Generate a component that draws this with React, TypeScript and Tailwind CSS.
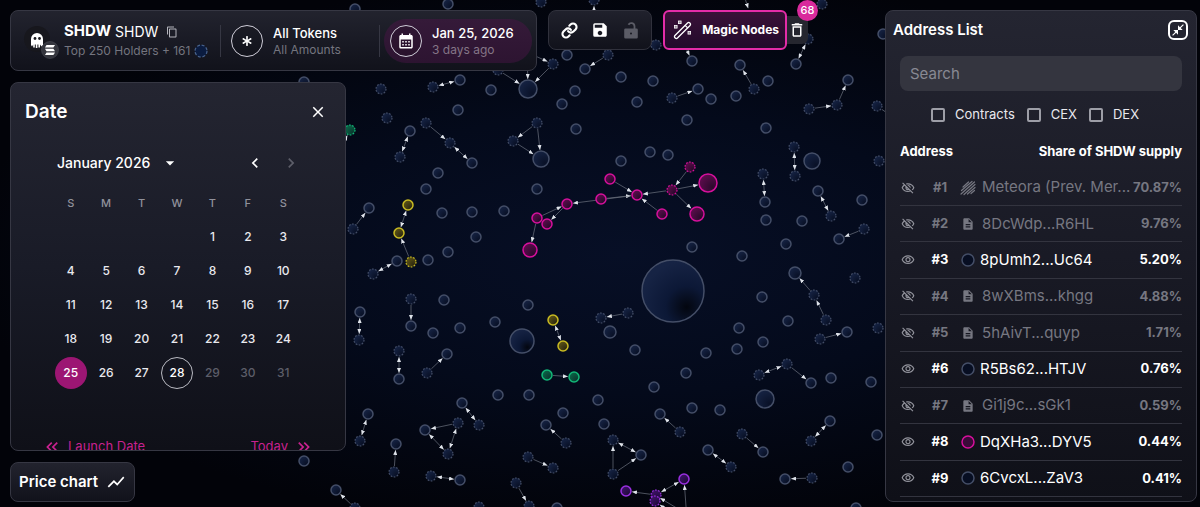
import { useState } from 'react'
import type { ReactNode } from 'react'
import { Link } from 'lucide-react'
import { FaAsterisk } from 'react-icons/fa'
import {
  MdArrowDropDown,
  MdCalendarMonth,
  MdChevronLeft,
  MdChevronRight,
  MdClose,
  MdCloseFullscreen,
  MdContentCopy,
  MdDeleteOutline,
  MdDescription,
  MdKeyboardDoubleArrowLeft,
  MdKeyboardDoubleArrowRight,
  MdOutlineVisibility,
  MdOutlineVisibilityOff,
  MdSave,
  MdShowChart,
} from 'react-icons/md'

type Tone = 'blue' | 'pink' | 'yellow' | 'green' | 'purple'

// x, y, radius (defaults to 5)
type Point = [number, number, number?]
// x1, y1, x2, y2, arrow on both ends
type Edge = [number, number, number, number, boolean?]

const tones: Record<Tone, { stroke: string; inner: string; outer: string }> = {
  blue: { stroke: '#444e67', inner: '#152242', outer: '#091127' },
  pink: { stroke: '#d6109c', inner: '#5c0c4c', outer: '#2b0a2c' },
  yellow: { stroke: '#c9bb22', inner: '#5c5316', outer: '#2f2a10' },
  green: { stroke: '#12b878', inner: '#0b6447', outer: '#0a3a30' },
  purple: { stroke: '#9a2fe0', inner: '#3d1266', outer: '#210a3d' },
}

const solid: Record<Tone, Point[]> = {
  blue: [
    [355, 9], [448, 4], [304, 82], [460, 80], [491, 90], [528, 89, 9], [585, 69], [575, 91], [562, 104], [576, 129],
    [458, 110], [472, 163], [410, 131], [541, 159, 8], [438, 173], [426, 189], [537, 189], [369, 208], [397, 261],
    [428, 260], [448, 252], [476, 237], [442, 213], [472, 212], [504, 211], [567, 55], [621, 77], [653, 81], [692, 61],
    [740, 65], [796, 64], [698, 89], [711, 99], [736, 96], [768, 81], [637, 102], [687, 120], [766, 128], [848, 80],
    [812, 161, 8], [765, 202], [766, 220], [802, 221], [818, 191], [862, 200], [839, 239], [786, 244], [742, 256],
    [692, 247], [795, 273, 6], [650, 152], [668, 155], [621, 161], [673, 291, 31], [360, 312], [411, 326], [444, 300],
    [433, 333], [460, 328], [495, 322], [528, 305], [522, 341, 12], [399, 379], [447, 354], [498, 395], [529, 395],
    [563, 413], [546, 425], [462, 403], [425, 430], [368, 414], [396, 444], [460, 480], [304, 461], [336, 490],
    [557, 508], [610, 332, 6], [635, 350], [706, 353], [739, 328], [737, 349], [763, 342], [762, 297], [788, 321],
    [847, 332], [811, 383], [831, 378], [871, 382], [765, 399, 9], [686, 373], [654, 387], [598, 400], [604, 424],
    [692, 408], [720, 410], [660, 414], [763, 452], [708, 450], [830, 421], [877, 435], [848, 467], [785, 479],
    [856, 508], [641, 455], [883, 34],
  ],
  pink: [
    [610, 179], [601, 199], [567, 204], [537, 218], [547, 224], [530, 250, 7], [708, 183, 9], [697, 214, 7],
    [662, 214], [637, 195],
  ],
  yellow: [[408, 205], [399, 233], [553, 320], [563, 346]],
  green: [[547, 375], [574, 377]],
  purple: [[626, 491], [684, 479]],
}

const dashed: Record<Tone, Point[]> = {
  blue: [
    [541, 2], [594, 0], [433, 87], [381, 89], [387, 118], [498, 70], [553, 64], [426, 123], [450, 143], [400, 157],
    [537, 123], [513, 141], [353, 229], [373, 274], [656, 45], [608, 55], [808, 39], [672, 98], [754, 89], [809, 109],
    [837, 105], [877, 106], [879, 161], [794, 147], [795, 176], [763, 174], [831, 216], [864, 229], [855, 278],
    [359, 340], [411, 299], [399, 351], [427, 373], [566, 443], [479, 425], [458, 423], [448, 454], [360, 441],
    [394, 472], [431, 476], [355, 508], [528, 457], [553, 468], [516, 483], [529, 506], [479, 507], [601, 318],
    [628, 313], [814, 295], [826, 320], [820, 339], [878, 328], [787, 364], [759, 375], [680, 432], [742, 434],
    [731, 467], [811, 441], [812, 478], [613, 440], [613, 474], [822, 4],
  ],
  pink: [[690, 167], [672, 190]],
  yellow: [[411, 262]],
  green: [[350, 130]],
  purple: [[656, 495], [655, 501]],
}

const edges: Edge[] = [
  [433, 87, 460, 80, true], [498, 70, 528, 89], [553, 64, 528, 89], [527, 40, 528, 89], [522, 50, 553, 64],
  [594, 30, 594, 0], [608, 55, 585, 69], [680, 35, 692, 61], [808, 39, 796, 64, true], [743, -8, 750, 14],
  [426, 123, 450, 143], [450, 143, 472, 163, true], [410, 131, 400, 157, true], [537, 123, 513, 141],
  [537, 123, 541, 159], [513, 141, 541, 159], [353, 229, 369, 208], [373, 274, 397, 261, true],
  [408, 205, 399, 233, true], [411, 262, 399, 233], [340, 150, 350, 130], [672, 98, 698, 89], [754, 89, 740, 65],
  [809, 109, 837, 105], [837, 105, 848, 80], [877, 106, 900, 122], [794, 147, 795, 176, true],
  [763, 174, 765, 202, true], [818, 191, 831, 216, true], [864, 229, 839, 239], [690, 167, 672, 190],
  [672, 190, 708, 183], [672, 190, 697, 214], [672, 190, 637, 195], [662, 214, 637, 195], [610, 179, 637, 195],
  [601, 199, 637, 195], [637, 195, 567, 204], [537, 218, 567, 204], [567, 204, 547, 224], [537, 218, 530, 250],
  [360, 312, 359, 340, true], [411, 299, 411, 326], [399, 351, 399, 379, true], [427, 373, 447, 354],
  [553, 320, 563, 346, true], [547, 375, 574, 377], [462, 403, 479, 425, true], [458, 423, 425, 430],
  [458, 423, 448, 454, true], [425, 430, 448, 454, true], [368, 414, 360, 441, true], [394, 472, 396, 444],
  [431, 476, 460, 480, true], [355, 508, 336, 490], [528, 457, 553, 468], [516, 483, 529, 506], [566, 443, 546, 425],
  [628, 313, 601, 318], [814, 295, 795, 273], [826, 320, 814, 295], [820, 339, 847, 332], [787, 364, 759, 375, true],
  [787, 364, 811, 383], [680, 432, 660, 414], [742, 434, 763, 452], [708, 450, 731, 467, true],
  [830, 421, 811, 441, true], [812, 478, 785, 479], [613, 440, 641, 455, true], [613, 474, 641, 455],
  [613, 474, 613, 440], [656, 495, 684, 479, true], [656, 495, 626, 491], [687, 520, 684, 479], [690, 516, 655, 495],
  [680, 520, 655, 501],
]

const everyNode = Object.values(solid).flat()

function radiusAt(x: number, y: number) {
  return everyNode.find((n) => n[0] === x && n[1] === y)?.[2] ?? 5
}

function GraphEdge({ edge }: { edge: Edge }) {
  const [x1, y1, x2, y2, both] = edge
  const length = Math.hypot(x2 - x1, y2 - y1)
  const ux = (x2 - x1) / length
  const uy = (y2 - y1) / length
  const start = radiusAt(x1, y1) + 1
  const end = radiusAt(x2, y2) + 1
  return (
    <line
      x1={x1 + ux * start}
      y1={y1 + uy * start}
      x2={x2 - ux * end}
      y2={y2 - uy * end}
      stroke="#6d7280"
      strokeWidth="0.7"
      markerEnd="url(#arrow)"
      markerStart={both ? 'url(#arrow)' : undefined}
    />
  )
}

function BubbleMap() {
  return (
    <svg
      className="absolute inset-0 h-full w-full"
      viewBox="0 0 1200 507"
      preserveAspectRatio="xMidYMid slice"
      aria-hidden="true"
    >
      <defs>
        <marker id="arrow" viewBox="0 0 5 4" refX="5" refY="2" markerWidth="5" markerHeight="4" markerUnits="userSpaceOnUse" orient="auto-start-reverse">
          <path d="M0 0L5 2L0 4Z" fill="#dfe3ea" />
        </marker>
        <radialGradient id="space" cx="0.52" cy="0.5" r="0.55">
          <stop offset="0" stopColor="#070f26" />
          <stop offset="0.5" stopColor="#040a1b" />
          <stop offset="1" stopColor="#020309" />
        </radialGradient>
        {(Object.keys(tones) as Tone[]).map((tone) => (
          <radialGradient key={tone} id={`fill-${tone}`} cx="0.75" cy="0.75" r="0.8">
            <stop offset="0" stopColor={tones[tone].outer} />
            <stop offset="1" stopColor={tones[tone].inner} />
          </radialGradient>
        ))}
        <radialGradient id="fill-large" cx="0.72" cy="0.76" r="0.75">
          <stop offset="0" stopColor="#03060f" />
          <stop offset="0.45" stopColor="#0c1836" />
          <stop offset="1" stopColor="#162344" />
        </radialGradient>
      </defs>
      <rect width="1200" height="507" fill="url(#space)" />
      {edges.map((edge) => (
        <GraphEdge key={edge.join()} edge={edge} />
      ))}
      {(Object.keys(tones) as Tone[]).map((tone) => (
        <g key={tone} stroke={tones[tone].stroke} fill={`url(#fill-${tone})`}>
          {solid[tone].map(([x, y, r = 5]) => (
            <circle key={`${x}-${y}`} cx={x} cy={y} r={r} strokeWidth="1.5" fill={r > 10 ? 'url(#fill-large)' : undefined} />
          ))}
          {dashed[tone].map(([x, y]) => (
            <circle key={`${x}-${y}`} cx={x} cy={y} r="5" strokeWidth="1.2" strokeDasharray="1.7 1.44" />
          ))}
        </g>
      ))}
    </svg>
  )
}

function TokenLogo() {
  return (
    <svg className="h-9 w-9 shrink-0" viewBox="0 0 36 36" aria-hidden="true">
      <circle cx="14" cy="16" r="13" fill="#17171d" />
      <path d="M8 22V16a6 6 0 0 1 12 0v6l-1.5 1.5L17 21.5v3h-1.6v-3h-1v3.5h-1.6v-3.5h-1v3h-1.6v-3L9 23.5Z" fill="#fff" />
      <circle cx="12" cy="15.5" r="1.4" fill="#17171d" />
      <circle cx="16.5" cy="15.5" r="1.4" fill="#17171d" />
      <circle cx="27" cy="27" r="8.5" fill="#34353d" stroke="#4a4b54" strokeWidth="0.6" />
      <g fill="#fff">
        <path d="M23.500 22H32l-1.600 2.500H22Z" />
        <path d="M22 25.800H30.400l1.600 2.500H23.500Z" />
        <path d="M23.500 29.600H32l-1.600 2.500H22Z" />
      </g>
    </svg>
  )
}

function UnlockIcon() {
  return (
    <svg className="h-5 w-5" viewBox="0 0 20 20" aria-hidden="true">
      <path d="M7.500 4.800a3.200 3.200 0 0 1 6 1.400V9" fill="none" stroke="currentColor" strokeWidth="1.800" />
      <path fillRule="evenodd" d="M4.500 8.500h11a1.300 1.300 0 0 1 1.300 1.300v7.400a1.300 1.300 0 0 1-1.300 1.300h-11a1.300 1.300 0 0 1-1.300-1.300V9.800a1.300 1.300 0 0 1 1.300-1.300ZM10 12.600a1 1 0 1 0 0 2 1 1 0 0 0 0-2Z" fill="currentColor" />
    </svg>
  )
}

function WandIcon() {
  return (
    <svg className="h-5 w-5 shrink-0" viewBox="0 0 20 20" fill="none" stroke="currentColor" aria-hidden="true">
      <g transform="translate(9.5 10.5) rotate(45)" strokeWidth="1.3">
        <rect x="-1.8" y="-10.5" width="3.6" height="21" rx="1.6" />
        <path d="M-1.8 -5.500H1.800" />
      </g>
      <g fill="currentColor" fillOpacity="0.5" strokeWidth="0.8">
        <rect x="5.500" y="1" width="2.600" height="2.600" />
        <rect x="1.500" y="5.500" width="2.600" height="2.600" />
        <rect x="15" y="11.500" width="2.600" height="2.600" />
      </g>
    </svg>
  )
}

function MeteoraIcon() {
  return (
    <svg className="h-4 w-4" viewBox="0 0 16 16" stroke="currentColor" strokeWidth="1.2" strokeLinecap="round" aria-hidden="true">
      <path d="M3 7L8.500 2M1.500 10.500L12 1.500M1 14L14.500 2M4 14.500L15 4.500M7.500 14L15 7.500M11 13.500L14.500 10.500" />
    </svg>
  )
}

function BubbleDot({ tone }: { tone: Tone }) {
  return (
    <svg className="h-3.5 w-3.5" viewBox="0 0 14 14" aria-hidden="true">
      <circle cx="7" cy="7" r="6" fill={tone === 'pink' ? '#3a0a38' : '#070e22'} stroke={tones[tone].stroke} strokeWidth="1.5" />
    </svg>
  )
}

function RoundIcon({ children }: { children: ReactNode }) {
  return (
    <span className="flex h-8 w-8 shrink-0 items-center justify-center rounded-full border border-[#cfcdd8] bg-black/10">
      {children}
    </span>
  )
}

function TokenBar() {
  return (
    <div className="flex h-[61px] w-[527px] items-center rounded-lg border border-[#363743] bg-linear-to-b from-[#22232e] to-[#11121b] pr-1 pl-3">
      <TokenLogo />
      <div className="w-[149px] pl-[5px]">
        <div className="flex h-5 items-center gap-1 text-[15px] text-white">
          <strong className="font-bold">SHDW</strong>
          <span className="text-sm">SHDW</span>
          <button type="button" aria-label="Copy address" className="ml-1 text-[#b4b4bc]">
            <MdContentCopy className="h-3 w-3" />
          </button>
        </div>
        <div className="flex h-[18px] items-center gap-1 text-xs whitespace-nowrap text-[#74757f]">
          Top 250 Holders + 161
          <svg className="h-3.5 w-3.5 shrink-0" viewBox="0 0 14 14" aria-hidden="true">
            <circle cx="7" cy="7" r="6" fill="#0b1c40" stroke="#49638d" strokeWidth="1.2" strokeDasharray="3 1.7" />
          </svg>
        </div>
      </div>
      <span className="ml-3 h-8 w-px bg-[#363743]" />
      <button type="button" className="flex h-11 w-[158px] items-center gap-2.5 pl-2.5 text-left">
        <RoundIcon>
          <FaAsterisk className="h-2.5 w-2.5 text-white" />
        </RoundIcon>
        <span>
          <span className="block text-[13px] leading-[18px] font-medium text-white">All Tokens</span>
          <span className="block text-xs leading-4 text-[#74757f]">All Amounts</span>
        </span>
      </button>
      <span className="mr-1 h-8 w-px bg-[#363743]" />
      <button type="button" className="flex h-11 flex-1 items-center gap-2.5 rounded-full bg-linear-to-b from-[#351a39] to-[#2d1431] pl-1.5 text-left">
        <RoundIcon>
          <MdCalendarMonth className="h-[18px] w-[18px] text-white" />
        </RoundIcon>
        <span>
          <span className="block text-[13px] leading-[18px] font-medium text-white">Jan 25, 2026</span>
          <span className="block text-xs leading-4 text-[#857687]">3 days ago</span>
        </span>
      </button>
    </div>
  )
}

function MapTools() {
  return (
    <>
      <div className="flex h-10 items-center gap-3 rounded-lg border border-[#30313c] bg-linear-to-b from-[#20212c] to-[#11121b] px-2.5 text-white">
        <button type="button" aria-label="Copy link" className="flex w-5 justify-center">
          <Link className="h-[17px] w-[17px]" strokeWidth={3} />
        </button>
        <button type="button" aria-label="Save">
          <MdSave className="h-[18px] w-[18px]" />
        </button>
        <button type="button" aria-label="Unlock" disabled className="text-[#5b5c66]">
          <UnlockIcon />
        </button>
      </div>
      <div className="flex items-center">
        <button type="button" className="flex h-10 w-[124px] items-center justify-between rounded-md border-2 border-[#e42ca8] bg-linear-to-b from-[#3a1138] to-[#230a2b] pr-1.5 pl-2 text-xs font-bold text-white">
          <WandIcon />
          <span className="whitespace-nowrap">Magic Nodes</span>
        </button>
        <button type="button" aria-label="Clear 68 magic nodes" className="relative flex h-7 w-[21px] items-center justify-center rounded-r-md bg-[#25262f] pr-0.5 text-white">
          <MdDeleteOutline className="h-[18px] w-[18px] shrink-0" />
          <span className="absolute -top-4 -right-2.5 flex h-[21px] w-[21px] items-center justify-center rounded-full bg-[#d92a9c] text-[11px] font-medium">
            68
          </span>
        </button>
      </div>
    </>
  )
}

const weekDays = ['S', 'M', 'T', 'W', 'T', 'F', 'S']
const days = Array.from({ length: 31 }, (_, i) => i + 1)
const today = 28

function DatePanel() {
  const [selected, setSelected] = useState(25)

  const dayClass = (day: number) => {
    if (day === selected) return 'bg-[#9c1673] text-white'
    if (day === today) return 'border border-[#b9bac2] text-white'
    if (day > today) return 'text-[#5d5e69]'
    return 'text-[#e9e9ee]'
  }

  return (
    <section className="min-h-0 w-[336px] flex-1 overflow-hidden rounded-lg border border-[#363743] bg-linear-to-b from-[#242531] via-[#191b27] to-[#0f1018]">
      <div className="flex h-[58px] items-center justify-between pr-[18px] pl-3.5">
        <h2 className="text-[19px] font-semibold text-white">Date</h2>
        <button type="button" aria-label="Close" className="text-white">
          <MdClose className="h-[18px] w-[18px]" />
        </button>
      </div>
      <div className="ml-[42px] w-[248px]">
        <div className="flex h-11 items-center justify-between pl-1">
          <button type="button" className="flex items-center gap-2.5 text-sm font-medium text-white">
            January 2026
            <MdArrowDropDown className="h-5 w-5" />
          </button>
          <div className="flex gap-4">
            <button type="button" aria-label="Previous month" className="text-white">
              <MdChevronLeft className="h-5 w-5" />
            </button>
            <button type="button" aria-label="Next month" className="text-[#5d5e69]">
              <MdChevronRight className="h-5 w-5" />
            </button>
          </div>
        </div>
        <div className="grid grid-cols-7 justify-items-center text-[11px] leading-9 font-medium text-[#90919b]">
          {weekDays.map((day, i) => (
            <span key={i}>{day}</span>
          ))}
        </div>
        <div className="grid grid-cols-7 justify-items-center gap-y-0.5 text-xs font-medium">
          {days.map((day) => (
            <button
              key={day}
              type="button"
              onClick={() => setSelected(day)}
              className={`h-8 w-8 rounded-full ${day === 1 ? 'col-start-5' : ''} ${dayClass(day)}`}
            >
              {day}
            </button>
          ))}
        </div>
      </div>
      <div className="mt-10 flex justify-between pr-[31px] pl-[31px] text-[13px] text-[#c8218f]">
        <button type="button" className="flex h-9 items-center gap-1.5">
          <MdKeyboardDoubleArrowLeft className="h-5 w-5" />
          Launch Date
        </button>
        <button type="button" className="flex h-9 items-center gap-1.5">
          Today
          <MdKeyboardDoubleArrowRight className="h-5 w-5" />
        </button>
      </div>
    </section>
  )
}

interface Holder {
  name: string
  share: string
  kind: 'meteora' | 'contract' | 'blue' | 'pink'
}

const holders: Holder[] = [
  { name: 'Meteora (Prev. Mer...', share: '70.87%', kind: 'meteora' },
  { name: '8DcWdp...R6HL', share: '9.76%', kind: 'contract' },
  { name: '8pUmh2...Uc64', share: '5.20%', kind: 'blue' },
  { name: '8wXBms...khgg', share: '4.88%', kind: 'contract' },
  { name: '5hAivT...quyp', share: '1.71%', kind: 'contract' },
  { name: 'R5Bs62...HTJV', share: '0.76%', kind: 'blue' },
  { name: 'Gi1j9c...sGk1', share: '0.59%', kind: 'contract' },
  { name: 'DqXHa3...DYV5', share: '0.44%', kind: 'pink' },
  { name: '6CvcxL...ZaV3', share: '0.41%', kind: 'blue' },
]

function HolderIcon({ kind }: { kind: Holder['kind'] }) {
  if (kind === 'meteora') return <MeteoraIcon />
  if (kind === 'contract') return <MdDescription className="h-3.5 w-3.5" />
  return <BubbleDot tone={kind} />
}

function AddressPanel() {
  return (
    <aside className="flex w-[312px] shrink-0 flex-col overflow-hidden rounded-lg border border-[#363743] bg-linear-to-b from-[#242531] via-[#191a25] to-[#0f1018]">
      <div className="flex h-[38px] items-center justify-between pr-2 pl-[7px]">
        <h2 className="text-[15px] font-semibold text-white">Address List</h2>
        <button type="button" aria-label="Collapse" className="flex h-5 w-5 items-center justify-center rounded-md border-2 border-white text-white">
          <MdCloseFullscreen className="h-3.5 w-3.5 shrink-0" />
        </button>
      </div>
      <div className="px-3.5 pt-[7px]">
        <input
          type="search"
          aria-label="Search"
          placeholder="Search"
          className="h-[35px] w-full rounded-lg bg-[#34353f] px-2.5 text-[15px] text-white outline-none placeholder:text-[#888993]"
        />
        <div className="flex h-12 items-center justify-center gap-3 pr-3 text-[13px] text-[#e9e9ee]">
          {['Contracts', 'CEX', 'DEX'].map((label) => (
            <label key={label} className="flex items-center gap-2.5">
              <input type="checkbox" className="h-3.5 w-3.5 appearance-none rounded-xs border-2 border-[#9d9ea7] checked:bg-[#e42ca8]" />
              {label}
            </label>
          ))}
        </div>
        <table className="h-[358px] w-full table-fixed border-collapse">
          <colgroup>
            <col className="w-6" />
            <col className="w-8" />
            <col className="w-6" />
            <col />
            <col className="w-[52px]" />
          </colgroup>
          <thead>
            <tr className="text-[13px] font-bold text-white">
              <th colSpan={3} className="h-[31px] pb-1.5 text-left">Address</th>
              <th colSpan={2} className="pb-1.5 text-right whitespace-nowrap">Share of SHDW supply</th>
            </tr>
          </thead>
          <tbody>
            {holders.map((holder, i) => {
              const hidden = holder.kind === 'meteora' || holder.kind === 'contract'
              return (
                <tr key={holder.name} className={`border-b border-[#33343f] ${hidden ? 'text-[#767781]' : 'text-white'}`}>
                  <td className="pl-px">
                    <button type="button" aria-label={hidden ? 'Show address' : 'Hide address'} className="block text-[#92939c]">
                      {hidden ? <MdOutlineVisibilityOff className="h-3.5 w-3.5" /> : <MdOutlineVisibility className="h-3.5 w-3.5" />}
                    </button>
                  </td>
                  <td className="text-center text-[13px] font-bold">#{i + 1}</td>
                  <td>
                    <span className="flex justify-center">
                      <HolderIcon kind={holder.kind} />
                    </span>
                  </td>
                  <td className={`text-[15px] whitespace-nowrap ${hidden ? 'pl-0.5' : ''}`}>{holder.name}</td>
                  <td className="text-right text-[13px] font-bold">{holder.share}</td>
                </tr>
              )
            })}
          </tbody>
        </table>
      </div>
    </aside>
  )
}

export default function App() {
  return (
    <main className="relative h-screen overflow-hidden bg-[#03050d] font-['Inter',sans-serif]">
      <BubbleMap />
      <div className="relative flex h-full justify-between pt-2.5 pr-[3px] pb-[5px] pl-2.5">
        <div className="flex flex-col items-start gap-[11px]">
          <div className="flex items-start gap-[11px]">
            <TokenBar />
            <MapTools />
          </div>
          <DatePanel />
          <button type="button" className="flex h-10 items-center gap-2 rounded-lg border border-[#363743] bg-linear-to-b from-[#22232e] to-[#11121b] px-2 text-[15px] font-semibold text-white">
            Price chart
            <MdShowChart className="h-5 w-5" />
          </button>
        </div>
        <AddressPanel />
      </div>
    </main>
  )
}
